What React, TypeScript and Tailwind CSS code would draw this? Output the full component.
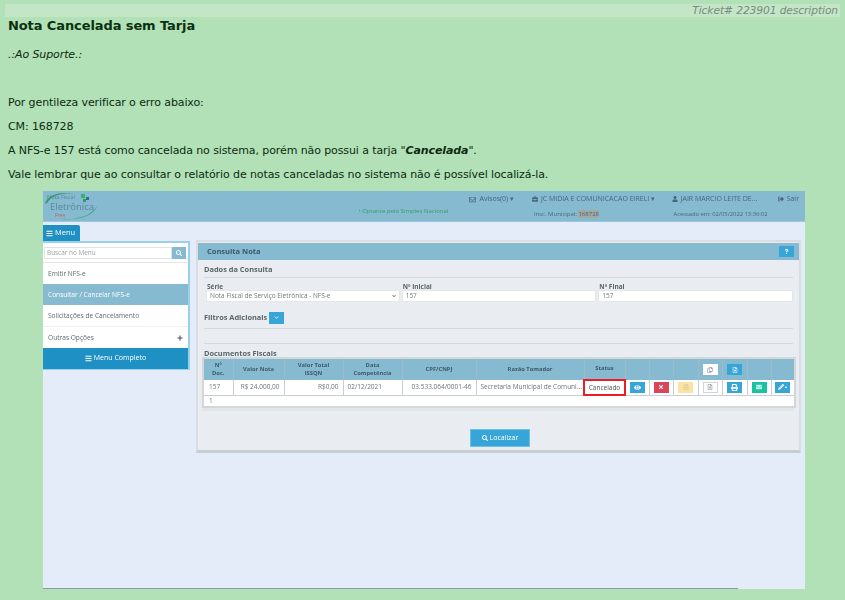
import {
  FaBars,
  FaBriefcase,
  FaChevronDown,
  FaEnvelope,
  FaEye,
  FaPencilAlt,
  FaPlus,
  FaPrint,
  FaQuestion,
  FaRegCopy,
  FaRegEnvelope,
  FaRegFileAlt,
  FaSearch,
  FaSignOutAlt,
  FaTimes,
  FaUser,
} from "react-icons/fa";

function Logo() {
  return (
    <div className="relative w-[56px] h-[28px] text-[#5d8797] leading-none">
      <svg width="56" height="30" viewBox="0 0 56 30" className="absolute left-0 top-0">
        <path d="M1 13C3 4 16 0 30 3C18 1 7 5 3 12Z" fill="#2f9e63" />
        <path d="M12 27C28 30 46 27 53 15C50 25 32 31 12 27Z" fill="#2f9e63" />
        <rect x="37" y="3" width="4" height="4" fill="#3fae6a" />
        <rect x="42" y="6" width="3" height="3" fill="#2a6f9c" />
        <rect x="39" y="8" width="3" height="3" fill="#2f9e63" />
      </svg>
      <span className="absolute left-[3px] top-[4px] text-[5.5px] h-[6px]">Nota Fiscal</span>
      <span className="absolute left-[6px] top-[11px] text-[9.5px] h-[10px] leading-[10px]">Eletrônica</span>
      <span className="absolute left-[11px] top-[22px] text-[5px] h-[5px] text-[#c8605a]">Free</span>
    </div>
  );
}

function TopBar() {
  return (
    <div className="h-[31px] bg-[#86bad1] flex pl-[1px] pr-[6px] border-b border-[#9cc8dc] text-[#45687a] text-[7px]">
      <Logo />
      <div className="ml-[259px] pt-[16px] w-[110px] text-[#3d9b62] text-[6px] whitespace-nowrap">
        • Optante pelo Simples Nacional
      </div>
      <div className="w-[65px] pt-[3px]">
        <div className="flex items-center gap-[3px] whitespace-nowrap ml-[2px]">
          <FaRegEnvelope size={7} /> Avisos(0) ▾
        </div>
      </div>
      <div className="w-[141px] pt-[3px] whitespace-nowrap">
        <div className="flex items-center gap-[3px]">
          <FaBriefcase size={6} /> JC MIDIA E COMUNICACAO EIRELI ▾
        </div>
        <div className="mt-[5px] text-[6px] ml-[2px]">
          Insc. Municipal: <span className="bg-[#a2a9a4]">168728</span>
        </div>
      </div>
      <div className="w-[107px] pt-[3px] whitespace-nowrap">
        <div className="flex items-center gap-[3px]">
          <FaUser size={6} /> JAIR MARCIO LEITE DE...
        </div>
        <div className="mt-[5px] text-[5.8px] ml-[2px]">Acessado em: 02/05/2022 13:36:02</div>
      </div>
      <div className="pt-[3px] flex items-start whitespace-nowrap">
        <span className="flex items-center gap-[3px]">
          <FaSignOutAlt size={6} /> Sair
        </span>
      </div>
    </div>
  );
}

function Sidebar() {
  return (
    <div className="w-[147px] shrink-0 text-[6.6px] text-[#5f6b70]">
      <div className="w-[37px] h-[16px] bg-[#1e90c3] rounded-tr-[2px] flex items-center gap-[2px] pl-[3px] text-white text-[7.5px]">
        <FaBars size={7} /> Menu
      </div>
      <div className="border-t-2 border-r-2 border-b border-[#99d0ea] bg-white">
        <div className="h-[20px] flex items-center pl-[1px] pr-[2px] border-b border-[#e6e6e6]">
          <div className="flex-1 h-[12px] border border-[#dde3e6] text-[#9aa3a8] text-[6.4px] pl-[2px] leading-[10px]">
            Buscar no Menu
          </div>
          <div className="w-[14px] h-[12px] bg-[#86bad1] flex items-center justify-center text-white">
            <FaSearch size={6} />
          </div>
        </div>
        <div className="h-[21px] flex items-center pl-[5px]">Emitir NFS-e</div>
        <div className="h-[21px] flex items-center pl-[5px] bg-[#86bad1] text-white">Consultar / Cancelar NFS-e</div>
        <div className="h-[22px] flex items-center pl-[5px] border-b border-[#f0f0f0]">Solicitações de Cancelamento</div>
        <div className="h-[21px] flex items-center justify-between pl-[5px] pr-[5px]">
          Outras Opções <FaPlus size={6} className="text-[#555]" />
        </div>
        <div className="h-[21px] bg-[#1e90c3] flex items-center justify-center gap-[2px] text-white text-[7px]">
          <FaBars size={7} /> Menu Completo
        </div>
      </div>
    </div>
  );
}

function Field({ label, value, select, className }: { label: string; value: string; select?: boolean; className: string }) {
  return (
    <div className={className}>
      <div className="font-bold text-[6.5px] h-[7px] leading-[7px] text-[#59656b] pl-[1px]">{label}</div>
      <div className="h-[12px] bg-white border border-[#e3e7ea] flex items-center justify-between pl-[3px] pr-[3px] text-[6.5px] text-[#6f787d]">
        {value}
        {select && <FaChevronDown size={4} className="text-[#555]" />}
      </div>
    </div>
  );
}

const cols = [
  "w-[30px]",
  "w-[51px]",
  "w-[59px]",
  "w-[59px]",
  "w-[74px]",
  "w-[108px]",
  "w-[41px]",
  "w-[24px]",
  "w-[24px]",
  "w-[25px]",
  "w-[24px]",
  "w-[25px]",
  "w-[24px]",
  "w-[24px]",
];

function ActionCell({ bg, children }: { bg: string; children: React.ReactNode }) {
  return (
    <td className="border-r border-[#c9ced2] p-0">
      <div className={`w-[15px] h-[11px] mx-auto flex items-center justify-center ${bg}`}>{children}</div>
    </td>
  );
}

function DocsTable() {
  const head = ["Nº\nDoc.", "Valor Nota", "Valor  Total\nISSQN", "Data\nCompetência", "CPF/CNPJ", "Razão Tomador", "Status"];
  return (
    <table className="table-fixed border-collapse w-[592px] ml-[-2px] mt-[-1px] border-2 border-[#d3d7da] bg-white text-[6.5px] text-[#6c757a]">
      <colgroup>
        {cols.map((c, i) => (
          <col key={i} className={c} />
        ))}
      </colgroup>
      <thead>
        <tr className="h-[22px] bg-[#86bad1] text-[#3f5a68]">
          {head.map((h) => (
            <th key={h} className="border-r border-[#9dbccb] font-bold text-[5.8px] leading-[7.5px] whitespace-pre-line text-center p-0">
              {h}
            </th>
          ))}
          <th className="border-r border-[#9dbccb]" />
          <th className="border-r border-[#9dbccb]" />
          <th className="border-r border-[#9dbccb]" />
          <th className="border-r border-[#9dbccb] p-0">
            <div className="w-[15px] h-[11px] mx-auto bg-white flex items-center justify-center text-[#8a8f92]">
              <FaRegCopy size={6} />
            </div>
          </th>
          <th className="border-r border-[#9dbccb] p-0">
            <div className="w-[15px] h-[11px] mx-auto bg-[#37a5d8] flex items-center justify-center text-white">
              <FaRegFileAlt size={6} />
            </div>
          </th>
          <th className="border-r border-[#9dbccb]" />
          <th />
        </tr>
      </thead>
      <tbody>
        <tr className="h-[15px] border-b border-[#c9ced2]">
          <td className="border-r border-[#c9ced2] pl-[5px] p-0">157</td>
          <td className="border-r border-[#c9ced2] text-right pr-[4px] p-0">R$ 24.000,00</td>
          <td className="border-r border-[#c9ced2] text-right pr-[4px] p-0">R$0,00</td>
          <td className="border-r border-[#c9ced2] pl-[4px] p-0">02/12/2021</td>
          <td className="border-r border-[#c9ced2] text-right pr-[4px] p-0">03.533.064/0001-46</td>
          <td className="border-r border-[#c9ced2] pl-[4px] p-0 whitespace-nowrap overflow-hidden">Secretaria Municipal de Comuni...</td>
          <td className="border-2 border-[#ee1c25] text-center p-0 text-[#555]">Cancelado</td>
          <ActionCell bg="bg-[#37a5d8] text-white"><FaEye size={7} /></ActionCell>
          <ActionCell bg="bg-[#dc4458] text-white"><FaTimes size={6} /></ActionCell>
          <ActionCell bg="bg-[#fbe3a6] text-[#d8c48a]"><FaRegFileAlt size={6} /></ActionCell>
          <ActionCell bg="bg-white border border-[#d0d4d7] text-[#8a8f92]"><FaRegFileAlt size={6} /></ActionCell>
          <ActionCell bg="bg-[#37a5d8] text-white"><FaPrint size={7} /></ActionCell>
          <ActionCell bg="bg-[#19c2a0] text-[#c9f2e8]"><FaEnvelope size={6} /></ActionCell>
          <td className="p-0">
            <div className="w-[15px] h-[11px] mx-auto bg-[#37a5d8] text-white flex items-center justify-center gap-[1px] text-[4px]">
              <FaPencilAlt size={6} />▴
            </div>
          </td>
        </tr>
        <tr className="h-[10px]">
          <td className="pl-[5px] p-0" colSpan={14}>1</td>
        </tr>
      </tbody>
    </table>
  );
}

function ConsultaPanel() {
  return (
    <div className="ml-[6px] mt-[3px] w-[605px] h-[213px] border-[2px] border-[#d9dde0] border-b-[3px] border-b-[#c8cdd0] bg-[#e9ecf1] flex flex-col">
      <div className="h-[17px] shrink-0 mt-[1px] bg-[#86bad1] flex items-center justify-between pl-[9px] pr-[5px] text-[#3c5868] font-bold text-[7.5px]">
        Consulta Nota
        <div className="w-[15px] h-[11px] bg-[#37a5d8] flex items-center justify-center text-white">
          <FaQuestion size={5} />
        </div>
      </div>
      <div className="px-[6px] flex flex-col text-[#59656b] flex-1">
        <div className="font-bold text-[7.4px] h-[17px] leading-[16px] mt-[1px] border-b border-[#d5d9dc]">Dados da Consulta</div>
        <div className="flex gap-[2px] mt-[5px] pl-[2px]">
          <Field label="Série" value="Nota Fiscal de Serviço Eletrônica - NFS-e" select className="w-[194px]" />
          <Field label="Nº Inicial" value="157" className="w-[195px]" />
          <Field label="Nº Final" value="157" className="w-[195px]" />
        </div>
        <div className="flex items-center gap-[2px] h-[15px] mt-[8px] font-bold text-[7.4px]">
          Filtros Adicionais
          <div className="w-[15px] h-[12px] bg-[#37a5d8] flex items-center justify-center text-[#b8e0f2]">
            <FaChevronDown size={5} />
          </div>
        </div>
        <div className="mt-[3px] border-t border-[#d5d9dc] h-[16px] border-b" />
        <div className="font-bold text-[7.4px] h-[13px] leading-[16px] mt-[1px]">Documentos Fiscais</div>
        <DocsTable />
        <div className="h-[3px] bg-[#e3e6e8] w-[592px] ml-[-2px]" />
        <div className="flex justify-center mt-[18px]">
          <div className="w-[60px] h-[18px] bg-[#37a5d8] border border-[#6ac0e6] text-white text-[7px] flex items-center justify-center gap-[2px] ml-[3px]">
            <FaSearch size={6} /> Localizar
          </div>
        </div>
      </div>
    </div>
  );
}

export default function App() {
  return (
    <div className="h-[600px] bg-[#b2e1b7] font-['DejaVu_Sans',sans-serif] text-[11px] tracking-[-0.1px] text-[#0c2b10] overflow-hidden relative">
      <div className="pt-[4px] pl-[5px] pr-[5px]">
        <div className="h-[13px] bg-[#c2e6c6] text-right italic text-[#7c8a80] text-[10.7px] leading-[14px] pr-[2px]">
          Ticket# 223901 description
        </div>
      </div>
      <div className="pl-[8px]">
        <h1 className="font-bold text-[13px] text-[#0b3011] leading-[18px]">Nota Cancelada sem Tarja</h1>
        <p className="italic mt-[13px] leading-[14px]">.:Ao Suporte.:</p>
        <p className="mt-[34px] leading-[14px]">Por gentileza verificar o erro abaixo:</p>
        <p className="mt-[10px] leading-[14px]">CM: 168728</p>
        <p className="mt-[10px] leading-[14px]">
          A NFS-e 157 está como cancelada no sistema, porém não possui a tarja "<b><i>Cancelada</i></b>".
        </p>
        <p className="mt-[10px] leading-[14px]">Vale lembrar que ao consultar o relatório de notas canceladas no sistema não é possível localizá-la.</p>
      </div>
      <div className="ml-[43px] mt-[9px] w-[762px] h-[398px] bg-[#e4ebf9] font-['Open_Sans',sans-serif] tracking-normal blur-[0.45px] relative">
        <TopBar />
        <div className="flex pt-[3px]">
          <Sidebar />
          <div className="pt-[12px]">
            <ConsultaPanel />
          </div>
        </div>
        <div className="absolute left-0 bottom-0 w-[695px] h-[1px] bg-[#8a9aa6]" />
      </div>
    </div>
  );
}
